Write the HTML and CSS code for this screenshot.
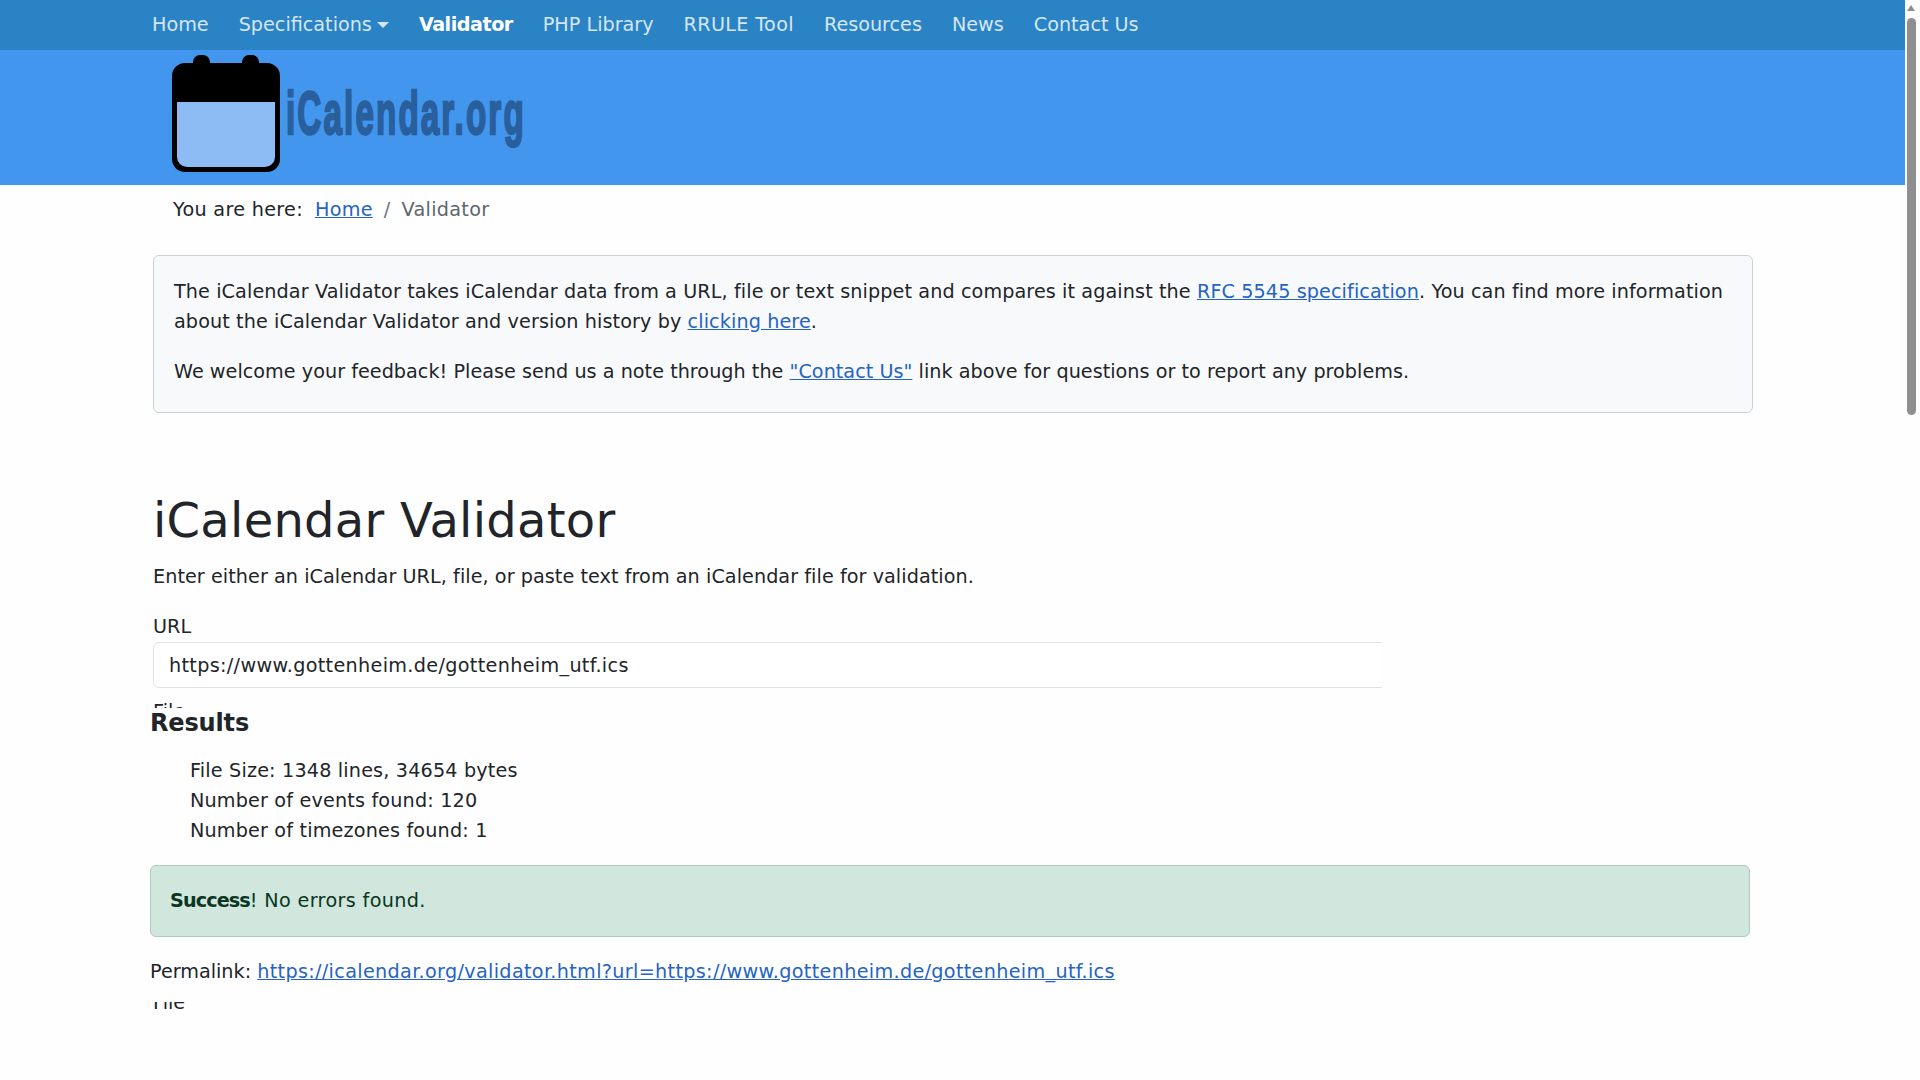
FILE: index.html
```html
<!DOCTYPE html>
<html lang="en">
<head>
  <meta charset="UTF-8" />
  <title>iCalendar Validator</title>
  <link rel="stylesheet" href="styles.css">
</head>
<body>

<div class="page">
  <!-- Nav -->
  <nav class="topnav">
    <a href="#">Home</a>
    <a href="#">Specifications<span class="caret"></span></a>
    <a href="#" class="active">Validator</a>
    <a href="#">PHP Library</a>
    <a href="#" class="wide">RRULE Tool</a>
    <a href="#">Resources</a>
    <a href="#">News</a>
    <a href="#">Contact Us</a>
  </nav>

  <!-- Logo -->
  <header class="banner">
    <svg class="logo-icon" viewBox="0 0 108 117" width="108" height="117">
      <path fill="#000" d="M21 7a7 7 0 0 1 7-7h3a7 7 0 0 1 7 7v1h32V7a7 7 0 0 1 7-7h3a7 7 0 0 1 7 7v1h8a13 13 0 0 1 13 13v83a13 13 0 0 1-13 13H13A13 13 0 0 1 0 104V21A13 13 0 0 1 13 8h8z"/>
      <path fill="#8dbcf4" d="M5 47h98v55a10 10 0 0 1-10 10H15A10 10 0 0 1 5 102z"/>
    </svg>
    <span class="logo-text">iCalendar.org</span>
  </header>

  <div class="crumbs">
    <span class="crumbs-label">You are here:</span>
    <a href="#">Home</a>
    <span class="crumbs-sep">/</span>
    <span class="crumbs-current">Validator</span>
  </div>

  <main class="content">
    <div class="intro">
      <p>The iCalendar Validator takes iCalendar data from a URL, file or text snippet and compares it against the <a href="#">RFC 5545 specification</a>. You can find more information about the iCalendar Validator and version history by <a href="#">clicking here</a>.</p>
      <p class="intro-note">We welcome your feedback! Please send us a note through the <a href="#">"Contact Us"</a> link above for questions or to report any problems.</p>
    </div>

    <h1>iCalendar Validator</h1>
    <p class="lead">Enter either an iCalendar URL, file, or paste text from an iCalendar file for validation.</p>

    <form class="form-clip">
      <label for="url">URL</label>
      <div class="input-clip">
        <input type="text" id="url" value="https://www.gottenheim.de/gottenheim_utf.ics" />
      </div>
      <label class="file-label">File</label>
    </form>

    <section class="results">
      <h4>Results</h4>
      <ul class="stats">
        <li>File Size: 1348 lines, 34654 bytes</li>
        <li>Number of events found: 120</li>
        <li>Number of timezones found: 1</li>
      </ul>
      <div class="alert"><strong>Success</strong>! No errors found.</div>
      <p class="permalink">Permalink: <a href="#">https://icalendar.org/validator.html?url=https://www.gottenheim.de/gottenheim_utf.ics</a></p>
    </section>

    <div class="file-tail"><span>File</span></div>
  </main>
</div>

<!-- Scrollbar -->
<div class="scrollbar">
  <span class="scroll-up"></span>
  <span class="scroll-thumb"></span>
</div>

</body>
</html>
```

FILE: styles.css
```css
html, body {
  margin: 0;
  padding: 0;
  height: 100%;
  overflow: hidden;
  background-color: #fefefe;
  color: #212529;
  font-family: 'DejaVu Sans', sans-serif;
  font-size: 19.2px;
  line-height: 30px;
}

body {
  display: flex;
}

a {
  color: #2563c4;
}

p {
  margin: 0;
}

.page {
  width: 1905px;
  flex: none;
}

/* nav */
.topnav {
  height: 50px;
  padding-left: 137px;
  display: flex;
  align-items: center;
  background-color: #2a83c4;
}

.topnav a {
  padding: 0 15px;
  color: #d6e6f3;
  text-decoration: none;
}

.topnav a.active {
  color: white;
  font-weight: bold;
  letter-spacing: -0.5px;
}

.topnav a.wide {
  letter-spacing: 0.35px;
}

.caret {
  display: inline-block;
  margin-left: 5px;
  vertical-align: 3px;
  border-top: 6px solid #d6e6f3;
  border-left: 6px solid transparent;
  border-right: 6px solid transparent;
}

/* logo */
.banner {
  height: 135px;
  padding-left: 172px;
  display: flex;
  align-items: flex-start;
  background-color: #4396ed;
}

.logo-icon {
  margin-top: 5px;
  flex: none;
}

.logo-text {
  margin: 27px 0 0 6px;
  color: #2a5f9e;
  font-family: 'Liberation Sans', sans-serif;
  font-weight: bold;
  font-size: 62px;
  line-height: 72px;
  letter-spacing: 4px;
  -webkit-text-stroke: 2.5px #2a5f9e;
  transform: scaleX(0.535);
  transform-origin: left center;
  white-space: nowrap;
}

/* breadcrumb */
.crumbs {
  height: 48px;
  box-sizing: border-box;
  padding: 2px 0 0 173px;
  display: flex;
  align-items: center;
  letter-spacing: 0.3px;
}

.crumbs-label {
  margin-right: 12px;
}

.crumbs-sep {
  margin: 0 11px;
  color: #6c757d;
}

.crumbs-current {
  color: #5f666d;
}

/* main */
.content {
  padding-left: 153px;
  width: 1600px;
}

.intro {
  margin-top: 22px;
  padding: 21px 20px 0;
  height: 158px;
  box-sizing: border-box;
  background-color: #f8f9fa;
  border: 1px solid #cdcfd1;
  border-radius: 6px;
  letter-spacing: 0.1px;
}

.intro .intro-note {
  margin-top: 20px;
  letter-spacing: 0.03px;
}

h1 {
  margin: 73px 0 0;
  font-weight: normal;
  font-size: 48px;
  line-height: 68px;
  letter-spacing: 0.26px;
}

.lead {
  margin-top: 8px;
  letter-spacing: 0.06px;
}

.form-clip {
  margin-top: 20px;
  height: 96px;
  overflow: hidden;
}

.form-clip label,
.file-tail span {
  display: block;
}

.input-clip {
  width: 1229px;
  overflow: hidden;
}

.input-clip input {
  display: block;
  width: 1400px;
  height: 46px;
  box-sizing: border-box;
  padding: 0 15px;
  background-color: white;
  border: 1px solid #dee2e6;
  border-radius: 6px;
  color: #212529;
  font-family: inherit;
  font-size: 19.2px;
  letter-spacing: 0.33px;
}

.file-label {
  margin-top: 9px;
}

.results {
  margin-left: -3px;
  width: 1600px;
  height: 294px;
  letter-spacing: 0.17px;
}

.results h4 {
  margin: 0;
  font-size: 24px;
  line-height: 31px;
  letter-spacing: -0.15px;
}

.stats {
  list-style: none;
  margin: 17px 0 0;
  padding: 0 0 0 40px;
}

.alert {
  margin-top: 19px;
  height: 72px;
  box-sizing: border-box;
  padding: 0 19px;
  display: flex;
  align-items: center;
  white-space: pre;
  background-color: #d1e7dd;
  border: 1px solid #aec9bf;
  border-radius: 6px;
  color: #0a3622;
  letter-spacing: 0.35px;
}

.alert strong {
  letter-spacing: -0.9px;
}

.permalink {
  margin-top: 20px;
  letter-spacing: 0;
}

.permalink a {
  letter-spacing: 0.33px;
}

.file-tail {
  height: 11px;
  overflow: hidden;
}

.file-tail span {
  margin-top: -14px;
}

/* scrollbar */
.scrollbar {
  flex: 1;
  display: flex;
  flex-direction: column;
  align-items: center;
  padding-right: 3px;
}

.scroll-up {
  margin-top: 5px;
  border-bottom: 6px solid #8f8f8f;
  border-left: 4px solid transparent;
  border-right: 4px solid transparent;
}

.scroll-thumb {
  margin-top: 7px;
  width: 9px;
  height: 397px;
  background-color: #8f8f8f;
  border-radius: 5px;
}
```
